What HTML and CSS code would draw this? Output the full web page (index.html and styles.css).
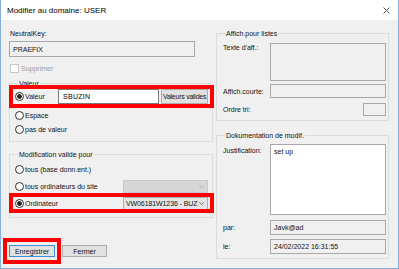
FILE: index.html
```html
<!DOCTYPE html>
<html>
<head>
<meta charset="utf-8">
<link rel="stylesheet" href="styles.css">
</head>
<body>
<div class="window">
  <div class="titlebar">
    <span class="title">Modifier au domaine: USER</span>
    <svg class="close" width="7" height="7" viewBox="0 0 7 7"><path d="M0.5 0.5L6.5 6.5M6.5 0.5L0.5 6.5" stroke="#444" stroke-width="0.9" fill="none"/></svg>
  </div>
  <div class="content">
    <div class="left">
      <div class="label">NeutralKey:</div>
      <div class="field key">PRAEFIX</div>
      <div class="check-row"><span class="checkbox"></span><span class="disabled">Supprimer</span></div>

      <div class="group g-valeur">
        <div class="legend">Valeur</div>
        <div class="row r-valeur">
          <span class="radio on"></span><span class="rlabel">Valeur</span>
          <div class="input">SBUZIN</div>
          <div class="btn vv">Valeurs valides</div>
        </div>
        <div class="row r-espace"><span class="radio"></span><span>Espace</span></div>
        <div class="row"><span class="radio"></span><span>pas de valeur</span></div>
      </div>

      <div class="group g-modif">
        <div class="legend">Modification valide pour</div>
        <div class="row r-m"><span class="radio"></span><span>tous (base donn.ent.)</span></div>
        <div class="row r-m"><span class="radio"></span><span class="grow">tous ordinateurs du site</span>
          <div class="combo off"><span></span><svg width="5" height="3" viewBox="0 0 5 3"><path d="M0.3 0.3L2.5 2.6L4.7 0.3" stroke="#a8a8a8" stroke-width="0.8" fill="none"/></svg></div>
        </div>
        <div class="row r-m"><span class="radio on"></span><span class="grow">Ordinateur</span>
          <div class="combo"><span class="ctext">VW06181W1236 - BUZ</span><svg width="5" height="3" viewBox="0 0 5 3"><path d="M0.3 0.3L2.5 2.6L4.7 0.3" stroke="#555" stroke-width="0.8" fill="none"/></svg></div>
        </div>
      </div>

      <div class="buttons">
        <div class="btn push default">Enregistrer</div>
        <div class="btn push">Fermer</div>
      </div>
    </div>

    <div class="right">
      <div class="group g-affich">
        <div class="legend">Affich.pour listes</div>
        <div class="frow f-texte"><span class="flabel">Texte d'aff.:</span><div class="box b-texte"></div></div>
        <div class="frow f-courte"><span class="flabel">Affich.courte:</span><div class="box b-courte"></div></div>
        <div class="frow f-tri"><span class="flabel">Ordre tri:</span><div class="box b-tri"></div></div>
      </div>
      <div class="group g-doc">
        <div class="legend">Dokumentation de modif.</div>
        <div class="frow f-just"><span class="flabel">Justification:</span><div class="box b-just">set up</div></div>
        <div class="frow f-par"><span class="flabel">par:</span><div class="box b-line">Javk@ad</div></div>
        <div class="frow f-le"><span class="flabel">le:</span><div class="box b-line">24/02/2022 16:31:55</div></div>
      </div>
    </div>
  </div>

  <div class="mark m1"></div>
  <div class="mark m2"></div>
  <div class="mark m3"></div>
</div>
</body>
</html>
```

FILE: styles.css
```css
* { box-sizing: border-box; margin: 0; padding: 0; }
html, body { width: 399px; height: 269px; overflow: hidden; background: #fff; }
body { font-family: "Liberation Sans", Arial, sans-serif; font-size: 7px; color: #111; }

.window {
  position: relative;
  width: 399px; height: 269px;
  background: #f0f0f0;
  border: 1px solid #86afdf; border-top: none;
  display: flex; flex-direction: column;
}
.titlebar {
  flex: none; height: 20px; background: #fff;
  display: flex; align-items: center; justify-content: space-between;
  padding: 0 8px 0 6px;
}
.title { font-size: 8px; color: #000; line-height: 10px; padding-top: 1px; }
.close { display: block; }

.content { flex: 1; display: flex; gap: 3px; padding: 0 9px 0 8px; }
.left { width: 204px; padding-top: 9px; display: flex; flex-direction: column; }
.right { width: 173px; padding-top: 13px; }

.label { line-height: 9px; padding-left: 1px; margin-bottom: 3px; }
.field { border: 1px solid #a8a8a8; background: #f0f0f0; display: flex; align-items: center; }
.key { width: 186px; height: 16px; padding-left: 3px; }

.check-row { margin-top: 6px; height: 10px; display: flex; align-items: center; gap: 2px; padding-left: 1px; }
.checkbox { width: 9px; height: 9px; border: 1px solid #c6c6c6; background: #fff; flex: none; }
.disabled { color: #9c9c9c; }

.group { border: 1px solid #dcdcdc; }
.legend { margin: -5px 0 0 3px; line-height: 9px; padding: 0 1px; background: #f0f0f0; width: fit-content; }

.g-valeur { margin-top: 10px; padding: 0 4px 5px 5px; }
.g-modif { margin-top: 12px; padding: 0 4px 7px 5px; }

.row { display: flex; align-items: center; height: 14px; }
.radio {
  flex: none; width: 9px; height: 9px; margin-right: 1px;
  border: 1px solid #333; border-radius: 50%; background: #fff;
}
.radio.on { background: radial-gradient(circle, #222 0 2px, #fff 2.6px); }
.r-valeur { height: 15px; margin-top: 1px; }
.r-espace { margin-top: 4px; }
.rlabel { width: 33px; flex: none; }
.input {
  width: 101px; height: 15px; background: #fff; border: 1px solid #7a7a7a;
  display: flex; align-items: center; padding-left: 4px; letter-spacing: 0.3px; color: #000;
}
.btn { background: #e1e1e1; border: 1px solid #adadad; display: flex; align-items: center; white-space: nowrap; overflow: hidden; }
.vv { width: 47px; height: 15px; margin-left: 2px; padding-left: 1px; letter-spacing: -0.25px; }

.r-m { margin-top: 3px; }
.grow { flex: 1; }
.combo {
  width: 85px; height: 13px; border: 1px solid #adadad; background: #e5e5e5;
  display: flex; align-items: center; justify-content: space-between; padding: 0 3px 0 2px;
  white-space: nowrap;
}
.ctext { letter-spacing: -0.1px; }
.combo.off { background: #d6d6d6; border-color: #c9c9c9; }
.combo svg { display: block; flex: none; }

.buttons { margin-top: 27px; display: flex; gap: 7px; }
.push { height: 12px; justify-content: center; }
.push.default { width: 46px; border-color: #3c8ddb; }
.push:not(.default) { width: 45px; }

.g-affich { padding: 0 2px 4px 5px; }
.g-doc { margin-top: 14px; padding: 0 2px 4px 5px; }
.frow { display: flex; align-items: center; }
.flabel { width: 48px; flex: none; line-height: 9px; padding-left: 1px; }
.box { border: 1px solid #a8a8a8; background: #f0f0f0; width: 116px; display: flex; align-items: center; padding-left: 3px; }
.f-texte { margin-top: 5px; align-items: flex-start; }
.b-texte { height: 38px; }
.f-courte { margin-top: 3px; }
.b-courte { height: 14px; }
.f-tri { margin-top: 5px; }
.b-tri { width: 23px; height: 13px; margin-left: auto; }
.f-just { margin-top: 4px; align-items: flex-start; }
.f-just .flabel { margin-top: 2px; }
.b-just { height: 71px; background: #fff; align-items: flex-start; padding-top: 3px; }
.f-par { margin-top: 5px; }
.f-le { margin-top: 4px; }
.b-line { height: 15px; }

.mark { position: absolute; border: 4px solid #ff0000; }
.m1 { left: 8px; top: 85px; width: 205px; height: 23px; }
.m2 { left: 8px; top: 193px; width: 205px; height: 20px; }
.m3 { left: 2px; top: 238px; width: 58px; height: 26px; }
```
